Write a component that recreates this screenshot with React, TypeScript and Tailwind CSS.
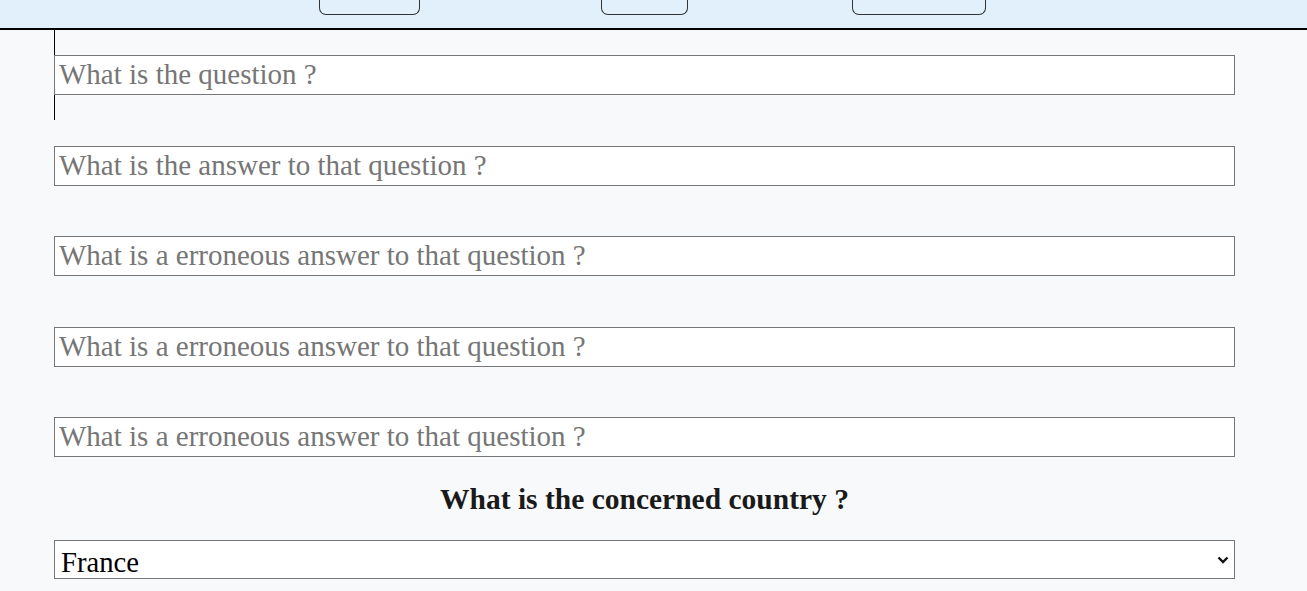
import React from "react";

const serif = "font-['Liberation_Serif','Times_New_Roman',serif]";

export default function App() {
  const placeholders = [
    "What is the question ?",
    "What is the answer to that question ?",
    "What is a erroneous answer to that question ?",
    "What is a erroneous answer to that question ?",
    "What is a erroneous answer to that question ?",
  ];
  return (
    <div className={`min-h-[591px] w-full bg-[#f8f9fa] ${serif}`}>
      <header className="h-[30px] bg-[#e1f0fb] border-b-2 border-black flex items-start">
        <div className="flex h-[15px] items-stretch">
          <button className="ml-[319px] w-[101px] h-[15px] border border-[#333] border-t-0 rounded-b-[7px] bg-transparent" />
          <button className="ml-[181px] w-[87px] h-[15px] border border-[#333] border-t-0 rounded-b-[7px] bg-transparent" />
          <button className="ml-[164px] w-[134px] h-[15px] border border-[#333] border-t-0 rounded-b-[7px] bg-transparent" />
        </div>
      </header>
      <div className="pl-[54px] w-[1235px]">
        <div className="relative flex flex-col gap-[50.5px] pt-[25px]">
          <div className="absolute left-0 top-0 h-[90px] w-px bg-black" />
          {placeholders.map((p, i) => (
            <input
              key={i}
              placeholder={p}
              className={`relative block h-[40px] w-full bg-white border border-[#767676] px-[4px] text-[29px] text-black placeholder:text-[#767676] outline-none ${serif}`}
            />
          ))}
        </div>
        <h2 className="mt-[27px] text-center text-[29.5px] font-bold text-[#1a1a1a] leading-[30px]">
          What is the concerned country ?
        </h2>
        <div className="mt-[26px] relative">
          <select
            defaultValue="France"
            className={`block h-[39px] w-full appearance-none bg-white border border-[#767676] pl-[6px] pb-[2px] text-[28.7px] text-black ${serif}`}
          >
            <option>France</option>
            <option>Germany</option>
          </select>
          <svg className="absolute right-[6px] top-[16px] pointer-events-none" width="12" height="8" viewBox="0 0 12 8">
            <path d="M1.5 1.5 L6 6 L10.5 1.5" fill="none" stroke="#111" strokeWidth="2.4" />
          </svg>
        </div>
      </div>
    </div>
  );
}
